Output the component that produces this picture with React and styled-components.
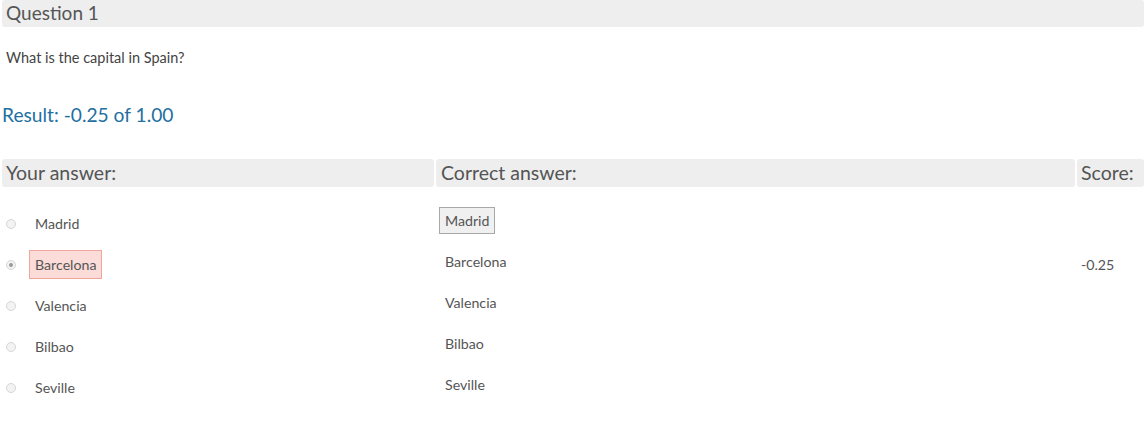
import React from "react";
import styled, { createGlobalStyle } from "styled-components";

const GlobalStyle = createGlobalStyle`
  body {
    margin: 0;
    background: #fff;
    font-family: Lato, "Open Sans", "Liberation Sans", sans-serif;
    color: #555;
  }
`;

const Page = styled.div`
  padding: 0 0 0 2px;
`;

const QuestionBar = styled.div`
  background: #eee;
  border-radius: 3px;
  height: 27px;
  padding-left: 4px;
  font-size: 19px;
  line-height: 26px;
  color: #555;
`;

const Prompt = styled.p`
  margin: 22px 0 0 4px;
  font-size: 14.5px;
  line-height: 18px;
  color: #444;
`;

const Result = styled.div`
  margin-top: 36px;
  font-size: 19.2px;
  line-height: 24px;
  color: #236fa1;
`;

const Grid = styled.div`
  display: grid;
  grid-template-columns: 432px 1fr 67px;
  column-gap: 2px;
  margin-top: 32px;
`;

const HeadCell = styled.div`
  background: #eee;
  border-radius: 3px;
  height: 28px;
  padding-left: ${(p) => p.$pad || 4}px;
  font-size: 19.5px;
  line-height: 28px;
  color: #555;
`;

const Column = styled.div`
  display: flex;
  flex-direction: column;
  padding-top: ${(p) => p.$top}px;
`;

const AnswerRow = styled.div`
  display: flex;
  align-items: center;
  height: 41px;
  font-size: 14.2px;
  color: #555;
`;

const Radio = styled.span`
  width: 10px;
  height: 10px;
  border-radius: 50%;
  border: 1px solid #d6d6d6;
  background: #f3f3f3;
  margin-left: 4px;
  margin-right: 13px;
  box-sizing: border-box;
  display: flex;
  align-items: center;
  justify-content: center;
  &::after {
    content: "";
    display: ${(p) => (p.$checked ? "block" : "none")};
    width: 4px;
    height: 4px;
    border-radius: 50%;
    background: #999;
  }
`;

const Choice = styled.span`
  padding: 5px 5px;
  border: 1px solid ${(p) => (p.$wrong ? "#f2a59c" : "transparent")};
  background: ${(p) => (p.$wrong ? "#fbdcd8" : "transparent")};
`;

const Correct = styled.span`
  padding: 4px 5px;
  margin-left: 3px;
  border: 1px solid ${(p) => (p.$right ? "#a8a8a8" : "transparent")};
  background: ${(p) => (p.$right ? "#f0f0f0" : "transparent")};
`;

const ScoreValue = styled.div`
  font-size: 14.2px;
  color: #555;
  height: 41px;
  display: flex;
  align-items: center;
  padding-left: 4px;
`;

const options = ["Madrid", "Barcelona", "Valencia", "Bilbao", "Seville"];
const chosen = "Barcelona";
const answer = "Madrid";

export default function App() {
  return (
    <>
      <GlobalStyle />
      <Page>
        <QuestionBar>Question 1</QuestionBar>
        <Prompt>What is the capital in Spain?</Prompt>
        <Result>Result: -0.25 of 1.00</Result>
        <Grid>
          <HeadCell>Your answer:</HeadCell>
          <HeadCell $pad={5}>Correct answer:</HeadCell>
          <HeadCell $pad={4}>Score:</HeadCell>
          <Column $top={16}>
            {options.map((o) => (
              <AnswerRow key={o}>
                <Radio $checked={o === chosen} />
                <Choice $wrong={o === chosen}>{o}</Choice>
              </AnswerRow>
            ))}
          </Column>
          <Column $top={13}>
            {options.map((o) => (
              <AnswerRow key={o}>
                <Correct $right={o === answer}>{o}</Correct>
              </AnswerRow>
            ))}
          </Column>
          <Column $top={57}>
            <ScoreValue>-0.25</ScoreValue>
          </Column>
        </Grid>
      </Page>
    </>
  );
}
